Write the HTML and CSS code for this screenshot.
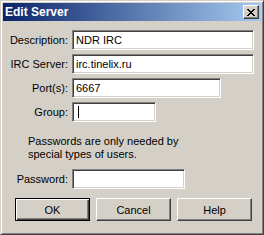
FILE: index.html
```html
<!DOCTYPE html>
<html lang="en">
<head>
  <meta charset="UTF-8">
  <title>Edit Server</title>
  <link rel="stylesheet" href="styles.css">
</head>
<body>
  <div class="window">
    <div class="titlebar">
      <span class="title">Edit Server</span>
      <button class="close" aria-label="Close">
        <svg width="8" height="7" viewBox="0 0 8 7" shape-rendering="crispEdges">
          <path fill="#000" d="M0 0h2v1H0z M6 0h2v1H6z M1 1h2v1H1z M5 1h2v1H5z M2 2h4v1H2z M3 3h2v1H3z M2 4h4v1H2z M1 5h2v1H1z M5 5h2v1H5z M0 6h2v1H0z M6 6h2v1H6z"/>
        </svg>
      </button>
    </div>

    <div class="content">
      <div class="form">
        <label for="desc">Description:</label>
        <input id="desc" class="field wide" type="text" value="NDR IRC">

        <label for="server">IRC Server:</label>
        <input id="server" class="field wide" type="text" value="irc.tinelix.ru">

        <label for="port">Port(s):</label>
        <input id="port" class="field port" type="text" value="6667">

        <label for="group">Group:</label>
        <div class="caret-wrap">
          <input id="group" class="field group" type="text" value="">
          <span class="caret"></span>
        </div>
      </div>

      <p class="note">Passwords are only needed by<br>special types of users.</p>

      <div class="form">
        <label for="pass">Password:</label>
        <input id="pass" class="field pass" type="password" value="">
      </div>

      <div class="buttons">
        <button class="btn default">OK</button>
        <button class="btn">Cancel</button>
        <button class="btn">Help</button>
      </div>
    </div>
  </div>
</body>
</html>
```

FILE: styles.css
```css
/* Window frame */
body {
  margin: 0;
  font-family: 'Liberation Sans', Arial, sans-serif;
  font-size: 11px;
  color: #000;
  background: #d4d0c8;
}

.window {
  width: 264px;
  height: 235px;
  box-sizing: border-box;
  background: #d4d0c8;
  border: 1px solid;
  border-color: #d4d0c8 #404040 #404040 #d4d0c8;
  box-shadow: inset 1px 1px #fff, inset -1px -1px #808080;
  padding: 2px;
}

/* Title bar */
.titlebar {
  height: 18px;
  display: flex;
  align-items: center;
  justify-content: space-between;
  padding: 0 2px;
  background: linear-gradient(90deg, #0a246a, #a6caf0);
}

.title {
  color: #fff;
  font-weight: bold;
  font-size: 12px;
}

.close {
  width: 16px;
  height: 14px;
  padding: 0;
  display: flex;
  align-items: center;
  justify-content: center;
  background: #d4d0c8;
  border: 1px solid;
  border-color: #fff #404040 #404040 #fff;
  box-shadow: inset -1px -1px #808080;
}

/* Form */
.content {
  padding-top: 9px;
}

.form {
  display: grid;
  grid-template-columns: 65px auto;
  column-gap: 4px;
  row-gap: 4px;
  align-items: center;
  justify-items: start;
}

.form label {
  justify-self: end;
}

.field {
  height: 20px;
  box-sizing: border-box;
  margin: 0;
  padding: 0 3px;
  font-family: 'Liberation Sans', Arial, sans-serif;
  font-size: 11px;
  color: #000;
  background: #fff;
  border: 1px solid;
  border-color: #808080 #fff #fff #808080;
  box-shadow: inset 1px 1px #404040, inset -1px -1px #d4d0c8;
  outline: none;
}

.wide { width: 182px; }
.port { width: 149px; }
.group { width: 84px; }
.pass { width: 113px; }

.caret-wrap {
  position: relative;
  height: 20px;
}

.caret {
  position: absolute;
  left: 6px;
  top: 4px;
  width: 1px;
  height: 12px;
  background: #000;
}

.note {
  margin: 13px 0 8px 25px;
  line-height: 13px;
}

/* Buttons */
.buttons {
  display: flex;
  gap: 6px;
  margin: 9px 0 0 12px;
}

.btn {
  width: 75px;
  height: 23px;
  padding: 0;
  font-family: 'Liberation Sans', Arial, sans-serif;
  font-size: 11px;
  color: #000;
  background: #d4d0c8;
  border: 1px solid;
  border-color: #fff #404040 #404040 #fff;
  box-shadow: inset -1px -1px #808080;
}

.btn.default {
  border: 1px solid #000;
  box-shadow: inset 1px 1px #fff, inset -1px -1px #404040, inset -2px -2px #808080;
}
```
